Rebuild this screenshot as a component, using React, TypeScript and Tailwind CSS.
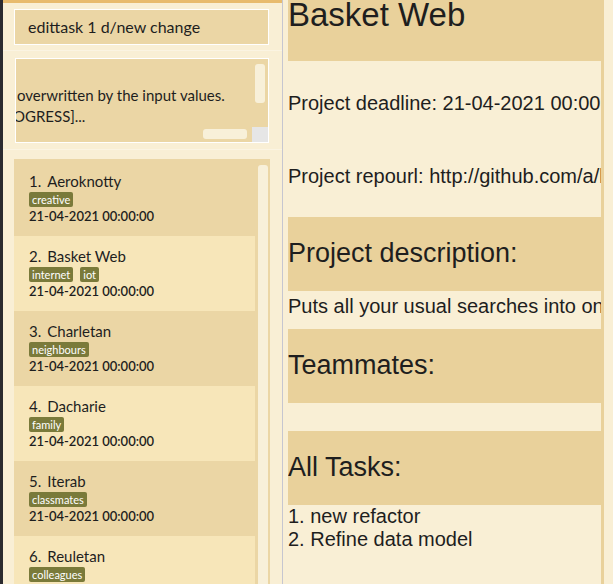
const projects = [
  { name: 'Aeroknotty', tags: ['creative'] },
  { name: 'Basket Web', tags: ['internet', 'iot'] },
  { name: 'Charletan', tags: ['neighbours'] },
  { name: 'Dacharie', tags: ['family'] },
  { name: 'Iterab', tags: ['classmates'] },
  { name: 'Reuletan', tags: ['colleagues'] },
];

function ProjectCard({ index, name, tags }: { index: number; name: string; tags: string[] }) {
  return (
    <div className={`h-[75px] shrink-0 pl-[15px] pt-[11px] ${index % 2 === 1 ? 'bg-[#f7e6b9]' : ''}`}>
      <div className="flex gap-[6px] text-[15px] leading-[18px] text-[#1e1e1e]">
        <span>{index + 1}.</span>
        <span>{name}</span>
      </div>
      <div className="mt-[2px] flex gap-[7px]">
        {tags.map((t) => (
          <span key={t} className="h-[15px] rounded-[2px] bg-[#7a7a3a] px-[3px] text-[11px] leading-[15px] text-white">
            {t}
          </span>
        ))}
      </div>
      <div className="mt-px text-[13px] font-semibold leading-[16px] text-[#1e1e1e]">21-04-2021 00:00:00</div>
    </div>
  );
}

function SectionTitle({ children }: { children: string }) {
  return (
    <div className="h-[74px] shrink-0 bg-[#e9d19b] pt-[21px] text-[27px] leading-[30px]">{children}</div>
  );
}

export default function App() {
  return (
    <div className="flex h-[584px] w-[613px] overflow-hidden bg-[#f9efd5]">
      <div className="w-[3px] bg-[#2b2b30]" />

      {/* left: command box, result, project list */}
      <div className="flex w-[279px] flex-col bg-[#f9efd5] font-['Lato',sans-serif]">
        <div className="h-[3px] bg-[#e8bb6e]" />
        <div className="pl-[11px] pt-[6px] pb-[5px]">
          <div className="flex h-[36px] w-[255px] items-center border border-white bg-[#ebd6a5] pl-[13px] text-[16px] text-[#1e1e1e]">
            edittask 1 d/new change
          </div>
        </div>
        <div className="h-px bg-[#fbf4e2]" />
        <div className="pl-[12px] pt-[7px] pb-[6px]">
          <div className="relative h-[85px] w-[254px] overflow-hidden border border-white bg-[#ebd6a5] pt-[26px] text-[15px] leading-[21px] whitespace-nowrap text-[#1e1e1e]">
            <div className="pl-px">overwritten by the input values.</div>
            <div className="ml-[-3px]">OGRESS]...</div>
            <div className="absolute right-[3px] top-[5px] h-[39px] w-[10px] rounded-[3px] bg-[#f8f0d9]" />
            <div className="absolute bottom-[3px] left-[187px] h-[10px] w-[44px] rounded-[3px] bg-[#f8f0d9]" />
            <div className="absolute bottom-0 right-0 h-[15px] w-[16px] bg-[#e6e6e6]" />
          </div>
        </div>
        <div className="h-px bg-[#fbf4e2]" />
        <div className="flex min-h-0 flex-1 pl-[11px] pt-[9px]">
          <div className="flex w-[256px] bg-[#ebd6a5]">
            <div className="flex w-[241px] flex-col pt-[2px]">
              {projects.map((p, i) => (
                <ProjectCard key={p.name} index={i} name={p.name} tags={p.tags} />
              ))}
            </div>
            <div className="ml-[3px] mt-[6px] w-[10px] rounded-t-[3px] bg-[#f8f0d9]" />
          </div>
        </div>
      </div>

      <div className="w-px bg-[#c6c6d0]" />

      {/* right: project details */}
      <div className="ml-[5px] flex w-[313px] flex-col overflow-hidden whitespace-nowrap font-['Liberation_Sans',Arial,sans-serif] text-[#1e1e1e]">
        <div className="h-[61px] shrink-0 bg-[#e9d19b] text-[33px] leading-[30px]">Basket Web</div>
        <div className="h-[156px] shrink-0 pt-[31px] text-[20px] leading-[23px]">
          <div>Project deadline: 21-04-2021 00:00:00</div>
          <div className="mt-[50px]">Project repourl: http://github.com/a/basketweb</div>
        </div>
        <SectionTitle>Project description:</SectionTitle>
        <div className="h-[38px] shrink-0 pt-[4px] text-[20px] leading-[23px]">
          Puts all your usual searches into one place
        </div>
        <SectionTitle>Teammates:</SectionTitle>
        <div className="h-[28px] shrink-0" />
        <SectionTitle>All Tasks:</SectionTitle>
        <div className="text-[20px] leading-[23px]">
          <div>1. new refactor</div>
          <div>2. Refine data model</div>
        </div>
      </div>

      <div className="w-[3px] bg-[#e9d19b]" />
      <div className="flex-1 bg-[#f9efd5]" />
    </div>
  );
}
